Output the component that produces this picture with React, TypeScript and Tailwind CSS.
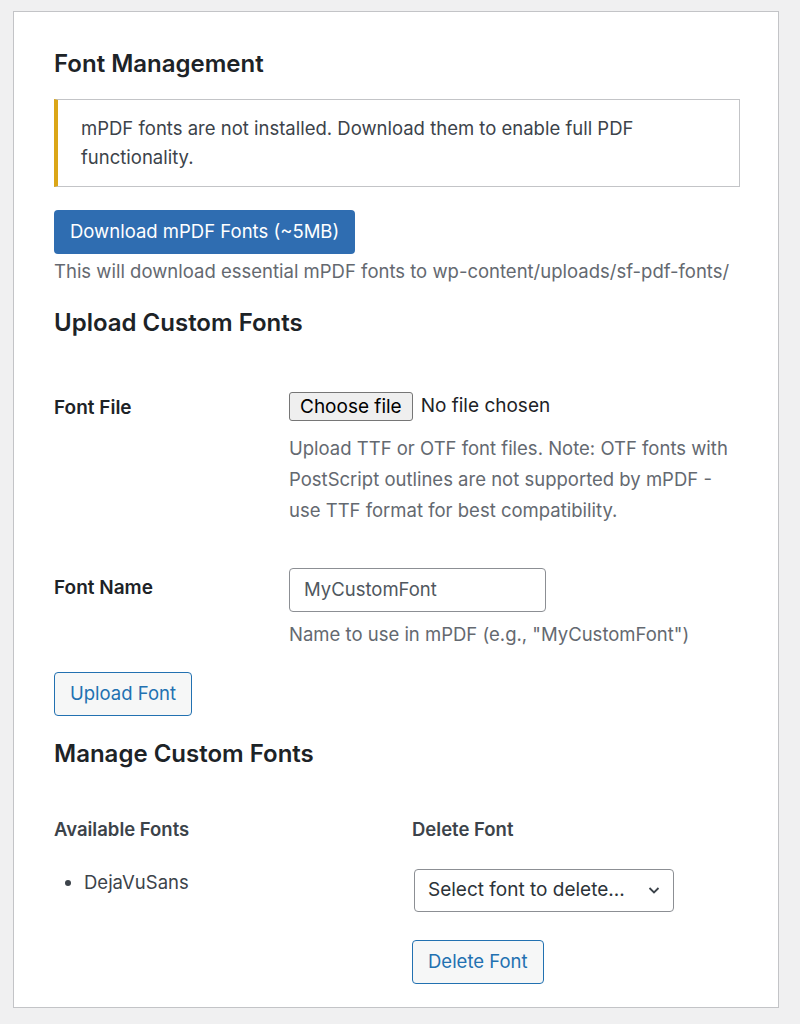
export default function App() {
  const f = { fontFamily: 'Inter, "Noto Sans", sans-serif' };
  return (
    <div className="min-h-[1024px] bg-[#f0f0f1] pt-[11px] pl-[13px] pr-[21px] text-[#1d2327]" style={f}>
      <div className="bg-white border border-[#c3c4c7] w-[766px] h-[997px] px-[40px]">
        <h2 className="text-[24px] font-semibold mt-[37px] leading-[30px]">Font Management</h2>
        <div className="mt-[20px] w-[686px] border border-[#c3c4c7] border-l-4 border-l-[#dba617] pl-[23px] pr-4 py-[14px] text-[18.5px] leading-[29px] text-[#3c434a]">
          mPDF fonts are not installed. Download them to enable full PDF functionality.
        </div>
        <button className="mt-[23px] h-[44px] px-[16px] bg-[#2f6db1] text-white rounded-[4px] text-[18.5px]">Download mPDF Fonts (~5MB)</button>
        <p className="mt-[4px] text-[18.5px] leading-[26px] text-[#646970]">This will download essential mPDF fonts to wp-content/uploads/sf-pdf-fonts/</p>
        <h2 className="text-[24px] font-semibold mt-[24px] leading-[30px]">Upload Custom Fonts</h2>
        <div className="flex mt-[54px]">
          <div className="w-[235px] text-[19px] font-semibold pt-[2px]">Font File</div>
          <div className="w-[440px]">
            <div className="flex items-center gap-[8px] text-[19px]">
              <button className="h-[29px] px-[10px] bg-[#efefef] border border-[#767676] rounded-[3px] text-[19px] text-black leading-none">Choose file</button>
              <span>No file chosen</span>
            </div>
            <p className="mt-[12px] text-[18.5px] leading-[31px] text-[#646970]">Upload TTF or OTF font files. Note: OTF fonts with PostScript outlines are not supported by mPDF - use TTF format for best compatibility.</p>
          </div>
        </div>
        <div className="flex mt-[42px]">
          <div className="w-[235px] text-[19px] font-semibold pt-[6px]">Font Name</div>
          <div>
            <div className="w-[257px] h-[44px] border border-[#8c8f94] rounded-[4px] px-[14px] flex items-center text-[18.5px] text-[#50575e]">MyCustomFont</div>
            <p className="mt-[7px] text-[18.5px] leading-[30px] text-[#646970]">Name to use in mPDF (e.g., "MyCustomFont")</p>
          </div>
        </div>
        <button className="mt-[23px] h-[44px] px-[15px] bg-[#f6f7f7] border border-[#2271b1] text-[#2271b1] rounded-[4px] text-[18.5px]">Upload Font</button>
        <h2 className="text-[24px] font-semibold mt-[23px] leading-[30px]">Manage Custom Fonts</h2>
        <div className="flex mt-[47px]">
          <div className="w-[358px]">
            <div className="text-[18.5px] font-semibold text-[#3c434a]">Available Fonts</div>
            <ul className="mt-[25px] list-disc pl-[30px] text-[18.5px] text-[#3c434a]"><li>DejaVuSans</li></ul>
          </div>
          <div>
            <div className="text-[18.5px] font-semibold text-[#3c434a]">Delete Font</div>
            <div className="mt-[25px] ml-[2px] w-[260px] h-[43px] border border-[#8c8f94] rounded-[4px] pl-[13px] pr-[12px] flex items-center justify-between text-[19px] text-[#2c3338]">
              <span className="whitespace-nowrap">Select font to delete...</span>
              <svg width="14" height="14" viewBox="0 0 14 14" fill="none" stroke="#3c434a" strokeWidth="1.8" className="shrink-0"><path d="M2.5 5l4.5 4.5L11.5 5" /></svg>
            </div>
            <button className="mt-[28px] h-[44px] px-[15px] bg-[#f6f7f7] border border-[#2271b1] text-[#2271b1] rounded-[4px] text-[18.5px]">Delete Font</button>
          </div>
        </div>
      </div>
    </div>
  );
}
